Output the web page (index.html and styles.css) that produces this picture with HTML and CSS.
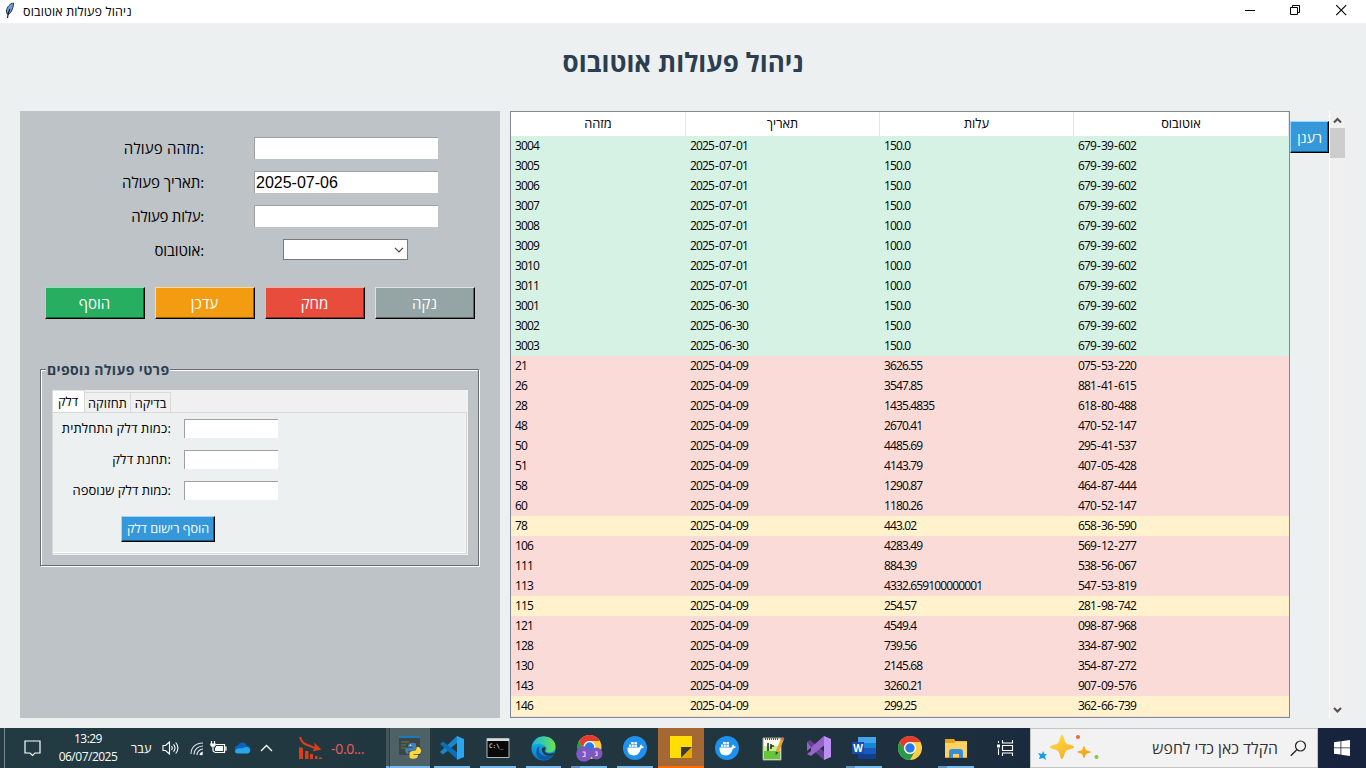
FILE: index.html
```
<!DOCTYPE html>
<html lang="he">
<head>
<meta charset="utf-8">
<title>ניהול פעולות אוטובוס</title>
<link rel="stylesheet" href="styles.css">
</head>
<body>
<div class="screen">
  <header class="titlebar">
    <svg class="feather" width="10" height="17" viewBox="0 0 10 17"><path d="M8.500 1C5 1.500 2 5 1.300 9l.8 3 1.500.3C6.500 10.500 8.500 6 8.500 1z" fill="#6f9fd8" stroke="#26384e" stroke-width="1"/><path d="M5 7C3.500 9.500 2.800 12 2.500 16" fill="none" stroke="#111" stroke-width="1.100"/></svg>
    <span class="window-title">ניהול פעולות אוטובוס</span>
    <div class="window-buttons">
      <svg width="46" height="23" viewBox="0 0 46 23"><path d="M17 10.500h10" stroke="#000"/></svg>
      <svg width="46" height="23" viewBox="0 0 46 23"><path d="M16.500 7.500h7v7h-7zM18.500 7.500v-2h7v7h-2" fill="none" stroke="#000"/></svg>
      <svg width="46" height="23" viewBox="0 0 46 23"><path d="M16.200 5.200l10 10M26.200 5.200l-10 10" stroke="#000" stroke-width="1.100"/></svg>
    </div>
  </header>
  <h1 class="heading"><span>ניהול פעולות אוטובוס</span></h1>
  <main class="main">
    <section class="panel">
      <div class="form">
        <label class="t-f1">מזהה פעולה:</label><div class="entry"></div>
        <label class="t-f2">תאריך פעולה:</label><div class="entry">2025-07-06</div>
        <label class="t-f3">עלות פעולה:</label><div class="entry"></div>
        <label class="t-f4">אוטובוס:</label>
        <div class="combo"><svg width="10" height="6" viewBox="0 0 10 6"><path d="M1 .8l4 4 4-4" fill="none" stroke="#444" stroke-width="1.200"/></svg></div>
      </div>
      <div class="actions">
        <button class="btn green">הוסף</button>
        <button class="btn orange">עדכן</button>
        <button class="btn red">מחק</button>
        <button class="btn gray">נקה</button>
      </div>
      <fieldset class="details">
        <legend><span>פרטי פעולה נוספים</span></legend>
        <div class="notebook">
          <div class="tabs"><span class="tab active">דלק</span><span class="tab tab-2">תחזוקה</span><span class="tab tab-3">בדיקה</span></div>
          <div class="page">
            <label>כמות דלק התחלתית:</label><div class="small-entry"></div>
            <label>תחנת דלק:</label><div class="small-entry"></div>
            <label class="t-g3">כמות דלק שנוספה:</label><div class="small-entry"></div>
            <button class="btn blue fuel">הוסף רישום דלק</button>
          </div>
        </div>
      </fieldset>
    </section>
    <section class="tree">
      <div class="tree-head"><span>מזהה</span><span>תאריך</span><span>עלות</span><span>אוטובוס</span></div>
      <div id="rows"></div>
    </section>
    <button class="btn blue refresh">רענן</button>
    <div class="scrollbar">
      <svg width="15" height="17" viewBox="0 0 15 17"><path d="M4 11.500L7.500 8l3.500 3.500" fill="none" stroke="#505050" stroke-width="2"/></svg>
      <div class="thumb"></div>
      <svg class="down" width="15" height="17" viewBox="0 0 15 17"><path d="M4 7L7.500 10.500 11 7" fill="none" stroke="#505050" stroke-width="2"/></svg>
    </div>
  </main>
  <footer class="taskbar">
    <div class="tray">
      <svg class="note" width="18" height="17" viewBox="0 0 18 17"><path d="M1 1h15v12h-5l-2.500 2.500L6 13H1z" fill="none" stroke="#fff" stroke-width="1.200"/></svg>
      <div class="clock"><span>13:29</span><span class="date">06/07/2025</span></div>
      <span class="lang">עבר</span>
      <svg class="sound" width="18" height="16" viewBox="0 0 18 16"><g fill="none" stroke="#fff" stroke-width="1.100"><path d="M1 5.500h2.500l4-3.500v12l-4-3.500H1z"/><path d="M9.500 6q1.500 2 0 4M11.500 4.300q3 3.700 0 7.400M13.700 2.500q4.500 5.500 0 11"/></g></svg>
      <svg class="wifi" width="14" height="15" viewBox="0 0 14 15"><g fill="none" stroke="#dfe5e7" stroke-width="1.100"><path d="M1 13C1 6 6 2 13 2M4 13.500C4 8.500 8 5 13 5M7 14c0-3 2.500-6 6-6" /><path d="M10 14q0-2 3-3" /></g><circle cx="11.500" cy="13" r="1.300" fill="#fff"/></svg>
      <svg class="battery" width="17" height="14" viewBox="0 0 17 14"><path d="M5.500 3.500h9v8h-10M14.500 6h1.500v3h-1.500M3 6v3.500q0 1.500 2 1.500M1.500 0v3M4.500 0v3" fill="none" stroke="#fff" stroke-width="1.200"/><path d="M.3 2.500h5.400v2Q4.500 6 3 6T.3 4.500zM6 5h7v5H5V7l1-1z" fill="#fff"/></svg>
      <svg class="cloud" width="17" height="12" viewBox="0 0 17 12"><path d="M1 8C.2 5 2 3.500 4 3.500 5.500-.5 11.500-.5 12.500 3.500 15 3.500 16 5 16.500 7z" fill="#0b63bd"/><path d="M1 9.500C1.500 6.500 5 6 7 6.500l5-1.500c3 0 5 2.500 4 4.500-.5 1.500-1.500 2-3 2H3.500C2 11.500 1 10.500 1 9.500z" fill="#28a8ea"/></svg>
      <svg class="caret" width="13" height="8" viewBox="0 0 13 8"><path d="M1 7l5.500-5.500L12 7" fill="none" stroke="#fff" stroke-width="1.300"/></svg>
      <svg class="stock" width="23" height="24" viewBox="0 0 23 24"><g fill="#d9401a"><path d="M0 11.500q2-1 4 1V23H0zM6 15h3.500v8H6zM11 18h3v5h-3zM16 20h2.500v3H16zM20 21.500h3V23h-3z"/><path d="M22.500 13.500l-9 2 2.500-4-1-5z"/></g><path d="M1 1q2 7 9 8.500l8 3.500" fill="none" stroke="#d9401a" stroke-width="2.200"/></svg>
      <span class="stock-text">-0.0...</span>
    </div>
    <div class="python-edge"></div>
    <div class="python-cell"><svg width="24" height="24" viewBox="0 0 24 24"><path d="M1 1h21v19H1z" fill="#3e4545"/><path d="M1 1h21v2H1z" fill="#1e78bb"/><path d="M3 7h8M3 10h5M3 13h6" stroke="#4f8c48" stroke-width="1.200"/><path d="M11 8.500Q15 7 18 8.500V14q-1 2-3.500 2h-4v3H9Q5.500 15.500 8.500 13h6v-.7H10q0-3 1-3.800z" fill="#3f80b7"/><path d="M18.500 12H21q4 4 .5 7h-6v.8H20Q20 23.500 17 23.500q-5.500.8-5.500-2v-4q.8-1.500 3-1.500 4.500 0 4-4z" fill="#ffd83e"/><circle cx="12.500" cy="10.200" r=".8" fill="#fff"/></svg></div>
    <div class="apps">
      <div class="app on"><svg width="24" height="24" viewBox="0 0 24 24"><path d="M17 0v7L3 18.500 0 16 17 0z" fill="#1787ce"/><path d="M0 8l3-2.500L18 17v7L0 8z" fill="#0b70b9"/><path d="M17 0l7 3v18l-7 3z" fill="#2ba5ee"/></svg></div>
      <div class="app on"><svg width="24" height="20" viewBox="0 0 24 20"><path d="M1 .5h22v19H1z" fill="#090909" stroke="#b3babd"/><path d="M1 1h22v2H1z" fill="#d8dddf"/><text x="3" y="10" class="cmd">C:\_</text></svg></div>
      <div class="app on"><svg width="25" height="25" viewBox="0 0 25 25"><defs><linearGradient id="e1"><stop stop-color="#16b6e8"/><stop offset="1" stop-color="#68e34e"/></linearGradient><linearGradient id="e2" x2="0" y2="1"><stop stop-color="#20b8dc"/><stop offset="1" stop-color="#087bd3"/></linearGradient></defs><circle cx="12.500" cy="12.500" r="12" fill="url(#e2)"/><path d="M1 10C3 3 8 0 13 .5c7 0 12 5 11.500 10.500 0 5-6 7-10 4.500 2-2 1-5-1-6C10 7 4 7 1 10z" fill="url(#e1)"/><path d="M9 10c-3 5 0 10 7 10q3 0 7-2c-3 6-10 7-14 5C4 21 4 12 9 10z" fill="#1059a5"/><path d="M14 11c1 2 0 3-.5 4 2 4 7 3 11 1l-2 2.500C15 22 10 17 11 12z" fill="#223842"/></svg></div>
      <div class="app on multi"><svg width="27" height="27" viewBox="0 0 27 27"><use href="#chrome" x="1.500" y="0"/><circle cx="8" cy="19" r="7.800" fill="#7e57c2"/><circle cx="20.500" cy="18.500" r="6" fill="#7e57c2"/><path d="M6.500 17h2.500v4.500H6.500M19 17h2v3.500h-2" fill="none" stroke="#e1d6f2" stroke-width="1.200"/></svg></div>
      <div class="app on"><svg width="24" height="24" viewBox="0 0 24 24"><g id="docker"><circle cx="12" cy="12" r="12" fill="#1d91ec"/><path d="M4.500 11.500h12q.5-3 2-3l1 2h1.500q-.5 2-3 2-2 7-7 7-7 0-6.500-8z" fill="#fff"/><path d="M6 8.500h8v2.500H6zM8 6h6v2H8z" fill="#f2f8fd"/><path d="M8.500 8v3M11.200 6v5" stroke="#1d91ec" stroke-width=".6"/></g></svg></div>
      <div class="app sticky"><svg width="22" height="22" viewBox="0 0 22 22"><path d="M0 0h22v11L11 22H0z" fill="#fedc05"/><path d="M11 11h11L11 22z" fill="#3b3b38"/><path d="M22 11v11H11z" fill="#e8aa00"/></svg></div>
      <div class="app"><svg width="24" height="24" viewBox="0 0 24 24"><use href="#docker"/></svg></div>
      <div class="app"><svg width="24" height="25" viewBox="0 0 24 25"><path d="M2 2h18v22H2z" fill="#fffef0" stroke="#99a48d"/><path d="M3 14h16v9H3z" fill="#64c738"/><path d="M3 10h16v5H3z" fill="#c5eb98"/><path d="M4 3h14" stroke="#555" stroke-width="2" stroke-dasharray="1 1"/><path d="M7 7v8M10 8v5M10 10h3" stroke="#263326" stroke-width="1.600"/><path d="M21.500 3l-5.500 13" stroke="#e7a52a" stroke-width="3"/><path d="M14.700 15.400l2.700 1.200-2.700 2.600z" fill="#4d3b20"/><path d="M21 4l1-2.500" stroke="#e56464" stroke-width="3"/></svg></div>
      <div class="app"><svg width="24" height="24" viewBox="0 0 24 24"><path d="M0 6l3-2 17 14-3 6L0 9z" fill="#674091"/><path d="M0 6l4 5v4l-4 3zM0 18l4 2L19 8 17 0 0 15z" fill="#9863cc"/><path d="M17 0l7 3v18l-7 3z" fill="#bc90f2"/></svg></div>
      <div class="app on multi"><svg width="24" height="22" viewBox="0 0 24 22"><path d="M6 0h18v22H6z" fill="#1685d8"/><path d="M6 0h18v6H6z" fill="#42a5ed"/><path d="M6 11h18v6H6z" fill="#185abd"/><path d="M6 17h18v5H6z" fill="#103f91"/><path d="M0 5h12v12H0z" fill="#174fab"/><text x="1.200" y="14.500" class="word">W</text></svg></div>
      <div class="app"><svg width="24" height="24" viewBox="0 0 24 24"><g id="chrome"><circle cx="12" cy="12" r="12" fill="#ffcd41"/><path d="M1.600 6A12 12 0 0 1 22.400 6H12a6 6 0 0 0-5.200 9z" fill="#e33b2e"/><path d="M1.600 6l5.200 9A6 6 0 0 0 17.200 15L12 24A12 12 0 0 1 1.600 6z" fill="#259b4b"/><circle cx="12" cy="12" r="6" fill="#fff"/><circle cx="12" cy="12" r="4.700" fill="#287ae6"/></g></svg></div>
      <div class="app on multi"><svg width="22" height="19" viewBox="0 0 22 19"><path d="M0 0h9l1.500 2H22v17H0z" fill="#e7a51c"/><path d="M0 4h9l2-1.500h11V18H0z" fill="#ffd264"/><path d="M4 19v-6q0-3 3-3h8q3 0 3 3v6h-4v-4H8v4z" fill="#378ed8"/></svg></div>
    </div>
    <div class="taskview"><svg width="17" height="16" viewBox="0 0 17 16"><path d="M5.500 0v3h10V0M5.500 16v-3h10v3M5.500 5.500h10v5h-10zM1.500 1v2M1.500 8.500V15" fill="none" stroke="#fff" stroke-width="1.100"/><path d="M0 4.500h3v3H0z" fill="#fff"/></svg></div>
    <div class="search">
      <svg class="stars" width="64" height="30" viewBox="0 0 64 30"><defs><linearGradient id="gold" x2="1" y2="1"><stop stop-color="#ffe052"/><stop offset="1" stop-color="#ef9c0c"/></linearGradient></defs><path d="M24 2c2 0 2 6 4 8s8 2 8 4-6 2-8 4-2 8-4 8-2-6-4-8-8-2-8-4 6-2 8-4 2-8 4-8zM46 13c1 0 1 3 2 4s5 1 5 2-4 1-5 2-1 4-2 4-1-3-2-4-5-1-5-2 4-1 5-2 1-4 2-4z" fill="url(#gold)"/><path d="M5 18l1.500 3H9l-2 2 1 4-3-2-4 1 1-3-2-3 4 1z" fill="#169ee5"/><circle cx="40" cy="4" r="2" fill="#f06539"/><circle cx="58.500" cy="24" r="2" fill="#82c943"/></svg>
      <span>הקלד כאן כדי לחפש</span>
      <svg width="17" height="17" viewBox="0 0 17 17"><circle cx="10.500" cy="6" r="5" fill="none" stroke="#222" stroke-width="1.200"/><path d="M7 9.500L.8 15.700" stroke="#222" stroke-width="1.300"/></svg>
    </div>
    <div class="start"><svg width="16" height="16" viewBox="0 0 16 16"><path d="M0 2.200L6.500 1.300v6.200H0zM7.300 1.200L16 0v7.500H7.300zM0 8.300h6.500v6.300L0 13.700zM7.300 8.300H16V16l-8.700-1.200z" fill="#fff"/></svg></div>
  </footer>
</div>
<script src="rows.js"></script>
</body>
</html>
```
FILE: styles.css
```
* { box-sizing: border-box; }
body { margin: 0; font-family: "Open Sans", "Liberation Sans", sans-serif; color: #000; }
svg { display: block; flex: none; }
.screen { width: 1366px; height: 768px; overflow: hidden; background: #ecf0f1; display: flex; flex-direction: column; }
.titlebar { height: 23px; flex: none; background: #fff; display: flex; align-items: center; padding-left: 5px; font-size: 12px; }
.feather { margin: -2px 8px 0 0; }
.window-title { white-space: nowrap; font-size: 12.5px; letter-spacing: .15px; }
.window-buttons { display: flex; margin-left: auto; }
.heading { margin: 0; height: 88px; flex: none; display: flex; justify-content: center; padding-top: 20px; font-size: 26px; line-height: 38px; color: #2c3e50; white-space: nowrap; }
.main { display: flex; height: 607px; flex: none; padding-left: 20px; align-items: flex-start; }
.panel { width: 480px; height: 607px; background: #bdc3c7; margin-right: 10px; padding: 26px 20px 0; }
.form { display: grid; grid-template-columns: 164px 184px; column-gap: 50px; grid-auto-rows: 34px; }
.form label { text-align: right; font-size: 15px; line-height: 22px; white-space: nowrap; }
.form .t-f1 { letter-spacing: .18px; }
.form .t-f2 { letter-spacing: -.08px; }
.form .t-f3 { letter-spacing: -.25px; }
.form .t-f4 { letter-spacing: -.1px; }
.entry { height: 22px; background: #fff; border-top: 1px solid #a0a0a0; border-left: 1px solid #a0a0a0; font: 16px/21px "Liberation Sans", sans-serif; padding-left: 1px; }
.combo { width: 125px; height: 21px; margin-left: 29px; border: 1px solid #7a7a7a; background: #fff; display: flex; align-items: center; justify-content: flex-end; padding-right: 3px; }
.btn { font-family: inherit; color: #fff; border-style: solid; border-width: 1px; padding: 0; white-space: nowrap; display: flex; align-items: center; justify-content: center; box-shadow: inset -1px -1px rgba(0, 0, 0, .4); }
.actions { display: flex; gap: 10px; padding: 14px 0 0 5px; }
.actions .btn { width: 100px; height: 32px; font-size: 15px; padding-right: 1px; }
.green { background: #27ae60; border-color: #7ff0ad #000 #000 #7ff0ad; }
.orange { background: #f39c12; border-color: #ffd98f #000 #000 #ffd98f; }
.red { background: #e74c3c; border-color: #ffa89e #000 #000 #ffa89e; }
.gray { background: #95a5a6; border-color: #d5e6e7 #000 #000 #d5e6e7; }
.blue { background: #3498db; border-color: #9cd5ff #000 #000 #9cd5ff; }
.details { margin: 40px 0 0; width: 439px; height: 207px; min-width: 0; padding: 0 0 0 11px; border: 1px solid #696c73; box-shadow: 1px 1px #fff, inset 1px 1px #fff; }
.details legend { height: 20px; margin-left: -6px; padding: 0 1px; background: #bdc3c7; font-size: 14px; line-height: 22px; font-weight: bold; letter-spacing: .38px; color: #2c3e50; white-space: nowrap; }
.notebook { width: 416px; height: 165px; margin-top: 11px; background: #f0f0f0; border-left: 1px solid #d9d9d9; }
.tabs { display: flex; align-items: flex-end; height: 22px; font-size: 12.7px; }
.tab { height: 20px; line-height: 21px; border: 1px solid #d9d9d9; border-left: 0; border-bottom: 0; text-align: center; white-space: nowrap; }
.tab.active { width: 32px; height: 22px; background: #fff; border-top-color: #e3e3e3; padding-right: 1px; }
.tab-2 { width: 46px; letter-spacing: .15px; } .tab-3 { width: 40px; }
.page { width: 414px; height: 142px; background: #ecf0f1; border: 1px solid #d9d9d9; border-left: 0; box-shadow: inset 0 -1px #fff; display: grid; grid-template-columns: 118px 94px; grid-template-rows: 31px 31px 31px 30px; column-gap: 13px; padding-top: 6px; }
.page label { font-size: 13px; letter-spacing: .12px; line-height: 18px; text-align: right; white-space: nowrap; }
.page .t-g3 { letter-spacing: 0; }
.small-entry { height: 19px; background: #fff; border-top: 1px solid #a0a0a0; border-left: 1px solid #a0a0a0; }
.fuel { grid-column: 1 / 3; width: 94px; height: 26px; margin: 4px 0 0 68px; padding-bottom: 1px; font-size: 12.6px; }
.tree { width: 780px; height: 607px; border: 1px solid #828790; background: #fadbd8; overflow: hidden; }
.tree-head, .row { display: grid; grid-template-columns: 175px 194px 194px 215px; }
.tree-head { height: 24px; background: #fff; font-size: 12.8px; line-height: 23px; text-align: center; }
.tree-head span { border-right: 1px solid #e5e5e5; }
.row { height: 20px; padding-left: 4px; font-size: 12px; line-height: 19px; letter-spacing: -.86px; background: #fadbd8; }
.row.ok { background: #d6f2e4; }
.row.mid { background: #fff2cc; }
.row span { white-space: nowrap; }
.row .dash { margin-left: 1px; letter-spacing: .14px; }
.refresh { width: 39px; height: 32px; margin-top: 10px; font-size: 14px; }
.scrollbar { width: 16px; height: 607px; border-left: 1px solid #fff; background: #f0f0f0; display: flex; flex-direction: column; }
.thumb { height: 30px; background: #cdcdcd; }
.scrollbar .down { margin-top: auto; }
.taskbar { height: 40px; margin-top: 10px; flex: none; display: flex; color: #fff; background: linear-gradient(90deg, #223a41, #21353f 55%, #1b2b3e 76%, #17233d); }
.tray { width: 382px; display: flex; align-items: center; padding-left: 19px; margin-left: 4px; border-left: 1px solid #78878b; flex: none; font-size: 12px; }
.clock { display: flex; flex-direction: column; width: 60px; margin-left: 16px; line-height: 18px; text-align: center; letter-spacing: -.55px; }
.clock .date { letter-spacing: -.5px; }
.lang { margin-left: 13px; width: 22px; font-size: 12.6px; }
.sound { margin-left: 9px; } .wifi { margin-left: 10px; } .battery { margin-left: 6px; } .cloud { margin-left: 7px; } .caret { margin-left: 9px; }
.stock { margin-left: 26px; }
.stock-text { margin-left: 9px; color: #f25a5d; font-size: 14px; letter-spacing: -.3px; }
.python-edge { width: 4px; flex: none; background: #44545a; border-right: 1px solid #2a3f46; border-bottom: 2px solid #76b9ed; }
.python-cell { width: 40px; background: #4e6165; border-bottom: 2px solid #76b9ed; display: flex; align-items: center; justify-content: center; flex: none; }
.apps { width: 550px; margin: 0 1px 0 -1px; display: grid; grid-template-columns: repeat(12, 1fr); flex: none; }
.app { display: flex; align-items: center; justify-content: center; position: relative; }
.app.on::after { content: ""; position: absolute; left: 5px; right: 5px; bottom: 0; height: 2px; background: #76b9ed; }
.app.multi::after { background: linear-gradient(90deg, #5e92b9 9px, #76b9ed 9px); }
.sticky { background: #a66832; border-bottom: 2px solid #ff6d00; }
.cmd { font: 6px "DejaVu Sans Mono", monospace; fill: #fff; }
.word { font: bold 10px "Open Sans", sans-serif; fill: #fff; }
.taskview { width: 50px; padding-left: 1px; display: flex; align-items: center; justify-content: center; flex: none; }
.search { width: 288px; flex: none; background: #f2f2f2; border: 1px solid #c4c4c4; color: #333; font-size: 15.8px; display: flex; align-items: center; padding: 0 10px 0 7px; }
.search span { margin: 0 12px 0 auto; white-space: nowrap; }
.start { width: 48px; display: flex; align-items: center; justify-content: center; }
```
FILE: rows.js
```
const records = `3004|2025-07-01|150.0|679-39-602
3005|2025-07-01|150.0|679-39-602
3006|2025-07-01|150.0|679-39-602
3007|2025-07-01|150.0|679-39-602
3008|2025-07-01|100.0|679-39-602
3009|2025-07-01|100.0|679-39-602
3010|2025-07-01|100.0|679-39-602
3011|2025-07-01|100.0|679-39-602
3001|2025-06-30|150.0|679-39-602
3002|2025-06-30|150.0|679-39-602
3003|2025-06-30|150.0|679-39-602
21|2025-04-09|3626.55|075-53-220
26|2025-04-09|3547.85|881-41-615
28|2025-04-09|1435.4835|618-80-488
48|2025-04-09|2670.41|470-52-147
50|2025-04-09|4485.69|295-41-537
51|2025-04-09|4143.79|407-05-428
58|2025-04-09|1290.87|464-87-444
60|2025-04-09|1180.26|470-52-147
78|2025-04-09|443.02|658-36-590
106|2025-04-09|4283.49|569-12-277
111|2025-04-09|884.39|538-56-067
113|2025-04-09|4332.659100000001|547-53-819
115|2025-04-09|254.57|281-98-742
121|2025-04-09|4549.4|098-87-968
128|2025-04-09|739.56|334-87-902
130|2025-04-09|2145.68|354-87-272
143|2025-04-09|3260.21|907-09-576
146|2025-04-09|299.25|362-66-739`.split("\n").map(r => r.split("|"));
const rows = document.getElementById("rows");
for (const record of records) {
  const row = document.createElement("div");
  const cost = parseFloat(record[2]);
  row.className = "row" + (cost < 200 ? " ok" : cost < 500 ? " mid" : "");
  for (const value of record) {
    const cell = document.createElement("span");
    cell.innerHTML = value.replace(/-/g, '<span class="dash">-</span>');
    row.append(cell);
  }
  rows.append(row);
}
```
